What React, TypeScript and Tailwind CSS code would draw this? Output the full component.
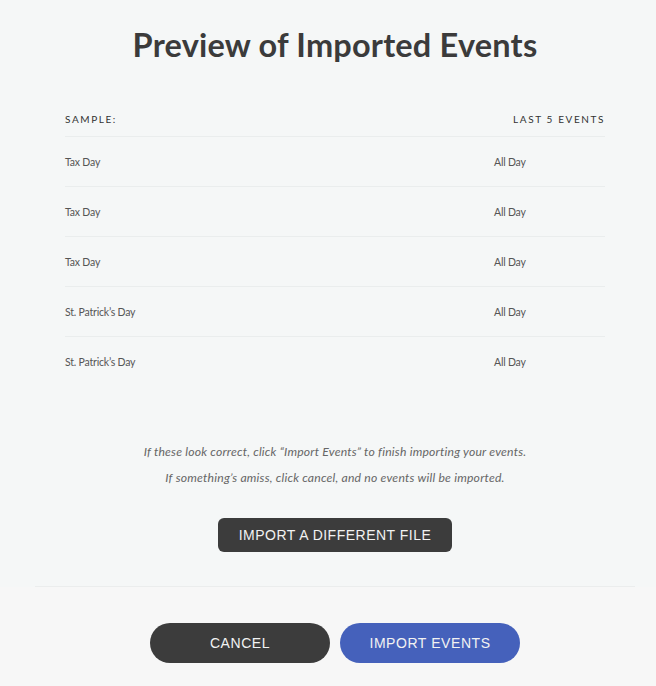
import React from "react";

const rows = [
  { name: "Tax Day", time: "All Day" },
  { name: "Tax Day", time: "All Day" },
  { name: "Tax Day", time: "All Day" },
  { name: "St. Patrick’s Day", time: "All Day" },
  { name: "St. Patrick’s Day", time: "All Day" },
];

export default function App() {
  return (
    <div className="w-[656px] h-[686px] overflow-hidden bg-[#f5f7f7]">
      <div className="w-[670px] h-[686px] flex flex-col" style={{ fontFamily: "Lato, 'Noto Sans', sans-serif" }}>
        <h1 className="pt-[27px] text-center text-[32.5px] leading-[36px] font-bold text-[#3b3b3b] tracking-[0.2px]">
          Preview of Imported Events
        </h1>
        <div className="mx-[65px] mt-[39px]">
          <div className="grid grid-cols-[1fr_111px] h-[35px] items-end pb-[10px] border-b border-[#eaeded] text-[10px] leading-[14px] tracking-[0.16em] text-[#333]">
            <span>SAMPLE:</span>
            <span className="text-right">LAST 5 EVENTS</span>
          </div>
          {rows.map((r, i) => (
            <div
              key={i}
              className={`grid grid-cols-[1fr_111px] items-center pt-[2px] text-[10.5px] text-[#555] tracking-[-0.2px] ${i < rows.length - 1 ? "h-[50px] border-b border-[#eaeded]" : "h-[49px]"}`}
            >
              <span>{r.name}</span>
              <span>{r.time}</span>
            </div>
          ))}
        </div>
        <div className="mt-[53px] text-center italic text-[12.2px] leading-[26px] text-[#666] tracking-[0.2px]">
          <p>If these look correct, click “Import Events” to finish importing your events.</p>
          <p>If something’s amiss, click cancel, and no events will be imported.</p>
        </div>
        <div className="mt-[27px] flex justify-center">
          <button
            className="w-[234px] h-[34px] rounded-[6px] bg-[#3c3c3c] text-[#f2f2f2] text-[14px] tracking-[0.035em]"
            style={{ fontFamily: "'Liberation Sans', Arial, sans-serif" }}
          >
            IMPORT A DIFFERENT FILE
          </button>
        </div>
        <div className="mt-[34px] mx-[35px] border-t border-[#ebeded]" />
        <div className="flex-1 bg-[#f7f7f7] flex justify-center gap-[10px] pt-[36px]" style={{ fontFamily: "'Liberation Sans', Arial, sans-serif" }}>
          <button className="w-[180px] h-[40px] rounded-full bg-[#3c3c3c] text-[#f2f2f2] text-[14px] tracking-[0.04em]">
            CANCEL
          </button>
          <button className="w-[180px] h-[40px] rounded-full bg-[#4561bb] text-[#f2f2f2] text-[14px] tracking-[0.04em]">
            IMPORT EVENTS
          </button>
        </div>
      </div>
    </div>
  );
}
